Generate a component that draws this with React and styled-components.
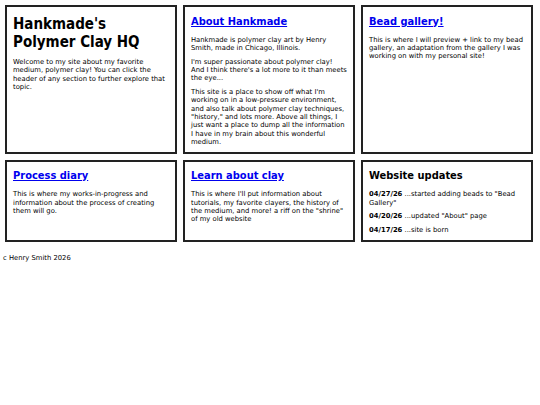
import React from 'react'
import styled, { createGlobalStyle } from 'styled-components';

const GlobalStyle = createGlobalStyle`
  html, body {
    margin: 0;
    padding: 0;
    background: #fff;
  }
  body {
    font-family: "DejaVu Sans", Verdana, sans-serif;
    color: #000;
  }
`;

const updates = [
    { date: "04/27/26", text: "...started adding beads to \"Bead Gallery\"" },
    { date: "04/20/26", text: "...updated \"About\" page" },
    { date: "04/17/26", text: "...site is born" },
];

const App = () => {
    return (
        <>
            <GlobalStyle />
            <Page>
                <Grid>
                    <Box>
                        <SiteTitle>Hankmade's Polymer Clay HQ</SiteTitle>
                        <Text>Welcome to my site about my favorite medium, polymer clay! You can click the header of any section to further explore that topic.</Text>
                    </Box>
                    <Box>
                        <Heading><a href="#about">About Hankmade</a></Heading>
                        <Text>Hankmade is polymer clay art by Henry Smith, made in Chicago, Illinois.</Text>
                        <Text>I'm super passionate about polymer clay! And I think there's a lot more to it than meets the eye...</Text>
                        <Text>This site is a place to show off what I'm working on in a low-pressure environment, and also talk about polymer clay techniques, "history," and lots more. Above all things, I just want a place to dump all the information I have in my brain about this wonderful medium.</Text>
                    </Box>
                    <Box>
                        <Heading><a href="#gallery">Bead gallery!</a></Heading>
                        <Text>This is where I will preview + link to my bead gallery, an adaptation from the gallery I was working on with my personal site!</Text>
                    </Box>
                    <Box>
                        <Heading><a href="#diary">Process diary</a></Heading>
                        <Text>This is where my works-in-progress and information about the process of creating them will go.</Text>
                    </Box>
                    <Box>
                        <Heading><a href="#learn">Learn about clay</a></Heading>
                        <Text>This is where I'll put information about tutorials, my favorite clayers, the history of the medium, and more! a riff on the "shrine" of my old website</Text>
                    </Box>
                    <Box>
                        <Heading>Website updates</Heading>
                        {updates.map((u) => (
                            <Text key={u.date}><Date>{u.date}</Date> {u.text}</Text>
                        ))}
                    </Box>
                </Grid>
                <Footer>c Henry Smith 2026</Footer>
            </Page>
        </>
    )
}

const Page = styled.div`
    padding: 5px 0 0 0;
`;

const Grid = styled.div`
    display: grid;
    grid-template-columns: repeat(3, 172px);
    gap: 6px;
    margin-left: 5px;
`;

const Box = styled.section`
    border: 2px solid #222;
    padding: 6px 6px 0 6px;
    background: #fff;
`;

const SiteTitle = styled.h1`
    font-family: "DejaVu Sans Condensed", "DejaVu Sans", sans-serif;
    font-stretch: condensed;
    font-size: 15px;
    font-weight: bold;
    line-height: 18px;
    margin: 2px 0 7px 0;
`;

const Heading = styled.h2`
    font-family: "DejaVu Sans Condensed", "DejaVu Sans", sans-serif;
    font-stretch: condensed;
    font-size: 11px;
    font-weight: bold;
    line-height: 13px;
    margin: 1.5px 0 8.3px 0;

    & a {
        color: #0000ee;
        text-decoration: underline;
    }
`;

const Text = styled.p`
    font-size: 6.8px;
    line-height: 8.3px;
    margin: 0 0 5.4px 0;
`;

const Date = styled.b`
    font-weight: bold;
`;

const Footer = styled.footer`
    font-size: 6.8px;
    margin: 12px 0 0 3px;
`;

export default App
